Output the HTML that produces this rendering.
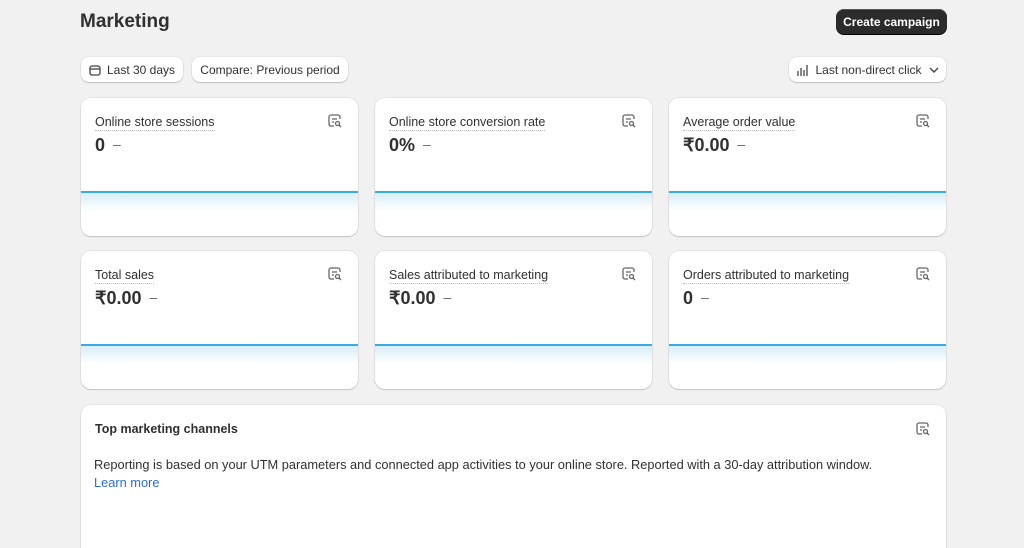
<!DOCTYPE html>
<html><head><style>
*{box-sizing:border-box;margin:0;padding:0}
html,body{width:1024px;height:548px;overflow:hidden}
body{background:#f1f1f1;font-family:"Liberation Sans",sans-serif;color:#303030;position:relative}
.abs{position:absolute}
h1{position:absolute;left:80px;top:11px;font-size:19px;font-weight:bold;color:#303030}
.cta{left:836px;top:9px;width:111px;height:25px;background:#2b2b2b;color:#fff;border-radius:8px;font-size:12px;font-weight:bold;display:flex;align-items:center;justify-content:center;box-shadow:0 1px 0 #000,inset 0 1px 0 #555}
.btn{background:#fff;border-radius:8px;height:25px;top:57px;font-size:12px;display:flex;align-items:center;justify-content:center;box-shadow:0 1px 1px rgba(0,0,0,.18),0 0 0 1px rgba(0,0,0,.04);color:#303030}
.card{background:#fff;border-radius:10px;box-shadow:0 1px 1px rgba(0,0,0,.15),0 0 0 1px rgba(0,0,0,.05);overflow:hidden}
.mc{width:277px;height:138px}
.lbl{position:absolute;left:14px;top:17px;font-size:12.5px;border-bottom:1px dotted #bbb;line-height:15px}
.val{position:absolute;left:14px;top:37px;font-size:18px;font-weight:bold}
.val span{font-weight:normal;color:#666;font-size:14px;margin-left:8px;position:relative;top:-2px}
.line{position:absolute;left:0;right:0;top:93px;height:2px;background:#3ba9e6}
.grad{position:absolute;left:0;right:0;top:95px;height:18px;background:linear-gradient(#d8eef9,#fff)}
.ic{position:absolute;right:16px;top:16px}
</style></head><body>
<h1>Marketing</h1>
<div class="abs cta">Create campaign</div>
<div class="abs btn" style="left:81px;width:102px"><svg width="12" height="12" viewBox="0 0 12 12" style="margin-right:6px"><rect x="1" y="2" width="10" height="9" rx="2" fill="none" stroke="#444" stroke-width="1.3"/><line x1="1" y1="5" x2="11" y2="5" stroke="#444" stroke-width="1.3"/></svg>Last 30 days</div>
<div class="abs btn" style="left:192px;width:156px">Compare: Previous period</div>
<div class="abs btn" style="left:789px;width:157px"><svg width="14" height="12" viewBox="0 0 14 12" style="margin-right:5px"><g stroke="#444" stroke-width="1.3"><line x1="2" y1="7" x2="2" y2="12"/><line x1="5" y1="4" x2="5" y2="12"/><line x1="8" y1="6" x2="8" y2="12"/><line x1="11" y1="1" x2="11" y2="12"/></g></svg>Last non-direct click<svg width="10" height="8" viewBox="0 0 10 8" style="margin-left:7px"><path d="M1 2l4 4 4-4" fill="none" stroke="#444" stroke-width="1.4"/></svg></div>

<div class="abs card mc" style="left:81px;top:98px"><div class="lbl">Online store sessions</div><div class="val">0<span>–</span></div><div class="line"></div><div class="grad"></div><svg class="ic" width="14" height="14" viewBox="0 0 14 14"><path d="M6 12H3a2 2 0 0 1-2-2V3a2 2 0 0 1 2-2h7a2 2 0 0 1 2 2v2M4 5h5M4 8h2" fill="none" stroke="#666" stroke-width="1.3"/><circle cx="9.5" cy="9.5" r="2" fill="none" stroke="#666" stroke-width="1.3"/><line x1="11" y1="11" x2="13" y2="13" stroke="#666" stroke-width="1.3"/></svg></div>
<div class="abs card mc" style="left:375px;top:98px"><div class="lbl">Online store conversion rate</div><div class="val">0%<span>–</span></div><div class="line"></div><div class="grad"></div><svg class="ic" width="14" height="14" viewBox="0 0 14 14"><path d="M6 12H3a2 2 0 0 1-2-2V3a2 2 0 0 1 2-2h7a2 2 0 0 1 2 2v2M4 5h5M4 8h2" fill="none" stroke="#666" stroke-width="1.3"/><circle cx="9.5" cy="9.5" r="2" fill="none" stroke="#666" stroke-width="1.3"/><line x1="11" y1="11" x2="13" y2="13" stroke="#666" stroke-width="1.3"/></svg></div>
<div class="abs card mc" style="left:669px;top:98px"><div class="lbl">Average order value</div><div class="val">₹0.00<span>–</span></div><div class="line"></div><div class="grad"></div><svg class="ic" width="14" height="14" viewBox="0 0 14 14"><path d="M6 12H3a2 2 0 0 1-2-2V3a2 2 0 0 1 2-2h7a2 2 0 0 1 2 2v2M4 5h5M4 8h2" fill="none" stroke="#666" stroke-width="1.3"/><circle cx="9.5" cy="9.5" r="2" fill="none" stroke="#666" stroke-width="1.3"/><line x1="11" y1="11" x2="13" y2="13" stroke="#666" stroke-width="1.3"/></svg></div>
<div class="abs card mc" style="left:81px;top:251px"><div class="lbl">Total sales</div><div class="val">₹0.00<span>–</span></div><div class="line"></div><div class="grad"></div><svg class="ic" width="14" height="14" viewBox="0 0 14 14"><path d="M6 12H3a2 2 0 0 1-2-2V3a2 2 0 0 1 2-2h7a2 2 0 0 1 2 2v2M4 5h5M4 8h2" fill="none" stroke="#666" stroke-width="1.3"/><circle cx="9.5" cy="9.5" r="2" fill="none" stroke="#666" stroke-width="1.3"/><line x1="11" y1="11" x2="13" y2="13" stroke="#666" stroke-width="1.3"/></svg></div>
<div class="abs card mc" style="left:375px;top:251px"><div class="lbl">Sales attributed to marketing</div><div class="val">₹0.00<span>–</span></div><div class="line"></div><div class="grad"></div><svg class="ic" width="14" height="14" viewBox="0 0 14 14"><path d="M6 12H3a2 2 0 0 1-2-2V3a2 2 0 0 1 2-2h7a2 2 0 0 1 2 2v2M4 5h5M4 8h2" fill="none" stroke="#666" stroke-width="1.3"/><circle cx="9.5" cy="9.5" r="2" fill="none" stroke="#666" stroke-width="1.3"/><line x1="11" y1="11" x2="13" y2="13" stroke="#666" stroke-width="1.3"/></svg></div>
<div class="abs card mc" style="left:669px;top:251px"><div class="lbl">Orders attributed to marketing</div><div class="val">0<span>–</span></div><div class="line"></div><div class="grad"></div><svg class="ic" width="14" height="14" viewBox="0 0 14 14"><path d="M6 12H3a2 2 0 0 1-2-2V3a2 2 0 0 1 2-2h7a2 2 0 0 1 2 2v2M4 5h5M4 8h2" fill="none" stroke="#666" stroke-width="1.3"/><circle cx="9.5" cy="9.5" r="2" fill="none" stroke="#666" stroke-width="1.3"/><line x1="11" y1="11" x2="13" y2="13" stroke="#666" stroke-width="1.3"/></svg></div>

<div class="abs card" style="left:81px;top:405px;width:865px;height:143px;border-radius:10px 10px 0 0">
<div class="abs" style="left:14px;top:17px;font-size:12.5px;font-weight:bold">Top marketing channels</div>
<svg class="ic" width="14" height="14" viewBox="0 0 14 14" style="top:17px"><path d="M6 12H3a2 2 0 0 1-2-2V3a2 2 0 0 1 2-2h7a2 2 0 0 1 2 2v2M4 5h5M4 8h2" fill="none" stroke="#666" stroke-width="1.3"/><circle cx="9.5" cy="9.5" r="2" fill="none" stroke="#666" stroke-width="1.3"/><line x1="11" y1="11" x2="13" y2="13" stroke="#666" stroke-width="1.3"/></svg>
<div class="abs" style="left:13px;top:51px;font-size:12.8px;line-height:18px">Reporting is based on your UTM parameters and connected app activities to your online store. Reported with a 30-day attribution window.<br><span style="color:#2c6ecb">Learn more</span></div>
</div>
</body></html>
